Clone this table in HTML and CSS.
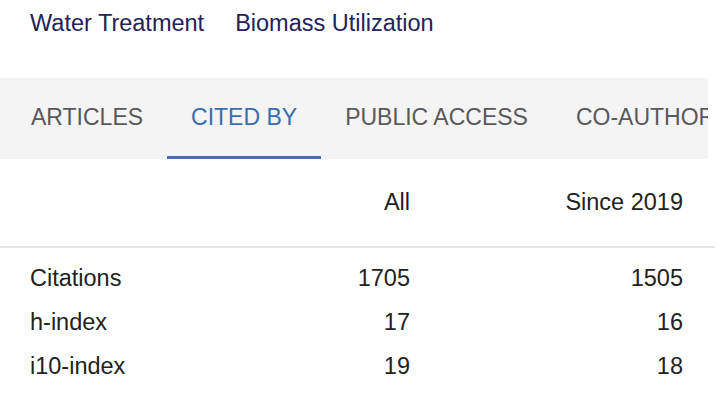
FILE: index.html
```html
<!DOCTYPE html>
<html lang="en">
<head>
    <title>Cited by</title>
    <link rel="stylesheet" href="styles.css">
</head>
<body>
    <div class="topics">
        <a class="topic" href="#">Water Treatment</a>
        <a class="topic" href="#">Biomass Utilization</a>
    </div>
    <div class="tabs">
        <div class="tab">ARTICLES</div>
        <div class="tab active">CITED BY</div>
        <div class="tab">PUBLIC ACCESS</div>
        <div class="tab">CO-AUTHORS</div>
    </div>
    <div class="stats">
        <div class="stats-head">
            <span></span>
            <span class="num">All</span>
            <span class="num">Since 2019</span>
        </div>
        <div class="stats-body">
            <div class="stats-row">
                <span>Citations</span>
                <span class="num">1705</span>
                <span class="num">1505</span>
            </div>
            <div class="stats-row">
                <span>h-index</span>
                <span class="num">17</span>
                <span class="num">16</span>
            </div>
            <div class="stats-row">
                <span>i10-index</span>
                <span class="num">19</span>
                <span class="num">18</span>
            </div>
        </div>
    </div>
</body>
</html>
```

FILE: styles.css
```css
body {
    font-family: "Liberation Sans", Arial, sans-serif;
    font-size: 23.5px;
    background-color: #ffffff;
    color: #222222;
    margin: 0;
    width: 720px;
    overflow: hidden;
}

.topics {
    height: 78px;
    padding-left: 30px;
    display: flex;
    gap: 31px;
    line-height: 46px;
}

.topic {
    color: #25215a;
    text-decoration: none;
}

.tabs {
    width: 708px;
    height: 81px;
    background-color: #f4f4f5;
    display: flex;
    padding-left: 7px;
    box-sizing: border-box;
    overflow: hidden;
    font-size: 23px;
}

.tab {
    flex: none;
    padding: 0 24px;
    line-height: 78px;
    color: #595959;
    border-bottom: 3px solid transparent;
}

.tab.active {
    color: #3a6db0;
    border-bottom-color: #4b6ea6;
}

.stats-head,
.stats-row {
    display: grid;
    grid-template-columns: 240px 140px 273px;
    padding-left: 30px;
    align-items: center;
}

.stats-head {
    height: 87px;
    border-bottom: 2px solid #e6e6e6;
    width: 685px;
}

.stats-body {
    padding-top: 8px;
}

.stats-row {
    height: 44px;
}

.num {
    text-align: right;
}
```
